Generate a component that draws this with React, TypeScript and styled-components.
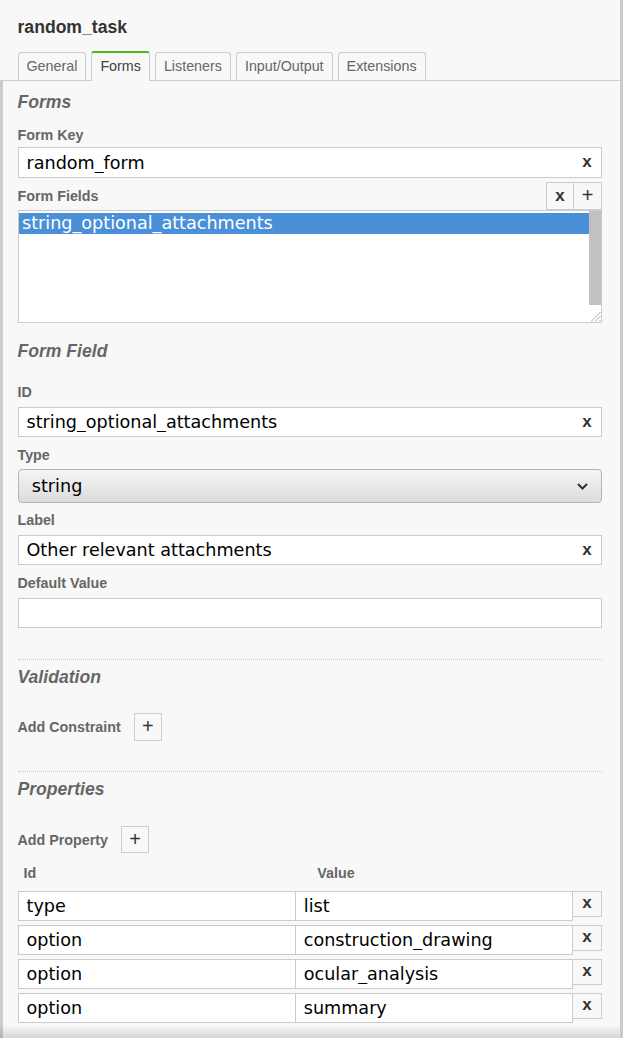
import React from 'react';
import styled, { createGlobalStyle } from 'styled-components';

const GlobalStyle = createGlobalStyle`
  html, body {
    margin: 0;
    padding: 0;
    background: #f8f8f8;
  }
  body {
    font-family: 'Liberation Sans', Arial, sans-serif;
  }
  * {
    box-sizing: border-box;
  }
`;

const Panel = styled.div`
  position: relative;
  width: 623px;
  height: 1038px;
  overflow: hidden;
  background: #f8f8f8;
  border-right: 3px solid #cbcbcb;
  display: flex;
  flex-direction: column;
`;

const Header = styled.div`
  padding: 17px 0 0 17.5px;
`;

const Title = styled.div`
  font-size: 17.6px;
  font-weight: bold;
  line-height: 20px;
  color: #333;
`;

const TabBar = styled.div`
  display: flex;
  align-items: flex-end;
  gap: 5px;
  height: 30px;
  margin-top: 14px;
  padding-left: 17.5px;
  border-bottom: 1px solid #ccc;
`;

const Tab = styled.div<{ $active?: boolean }>`
  position: relative;
  z-index: 1;
  display: flex;
  align-items: center;
  padding: 0 8px 2px;
  height: ${p => (p.$active ? '30px' : '28px')};
  margin-bottom: ${p => (p.$active ? '-1px' : '0')};
  border: 1px solid #ccc;
  border-bottom: none;
  border-top: ${p => (p.$active ? '2px solid #52b415' : '1px solid #ccc')};
  border-radius: 3px 3px 0 0;
  background: #f8f8f8;
  font-size: 14.3px;
  color: ${p => (p.$active ? '#444' : '#666')};
`;

const Content = styled.div`
  flex: 1;
  border-left: 3px solid #cccccc;
  padding: 11px 18px 0 14.5px;
`;

const GroupHeading = styled.div<{ $mt?: number }>`
  margin-top: ${p => p.$mt ?? 0}px;
  font-size: 17.6px;
  font-weight: bold;
  font-style: italic;
  line-height: 20px;
  color: #666;
`;

const Entry = styled.div<{ $mt?: number }>`
  margin-top: ${p => p.$mt ?? 0}px;
`;

const Label = styled.div<{ $mb?: number }>`
  font-size: 14.3px;
  font-weight: bold;
  line-height: 18px;
  color: #666;
  margin-bottom: ${p => p.$mb ?? 6}px;
`;

const Field = styled.div<{ $h?: number }>`
  display: flex;
  align-items: center;
  height: ${p => p.$h ?? 30}px;
  border: 1px solid #ccc;
  background: #fff;
`;

const TextInput = styled.input`
  flex: 1;
  min-width: 0;
  height: 100%;
  border: none;
  outline: none;
  background: transparent;
  padding: 0 0 0 8px;
  font-family: 'DejaVu Sans', sans-serif;
  font-size: 17.6px;
  color: #000;
`;

const ClearButton = styled.span`
  width: 28px;
  text-align: center;
  font-family: 'Liberation Sans', Arial, sans-serif;
  font-size: 17px;
  font-weight: bold;
  line-height: 1;
  color: #333;
  padding-bottom: 2px;
`;

const ListHeader = styled.div`
  display: flex;
  align-items: center;
  justify-content: space-between;
  height: 28px;
  margin-top: 4px;
`;

const ButtonGroup = styled.div`
  display: flex;
  align-self: stretch;
`;

const SquareButton = styled.div<{ $w?: number; $h?: number; $bold?: boolean }>`
  display: flex;
  align-items: center;
  justify-content: center;
  width: ${p => p.$w ?? 28}px;
  height: ${p => p.$h ?? 28}px;
  border: 1px solid #ccc;
  background: #f8f8f8;
  color: #333;
  font-size: ${p => (p.$bold ? '17px' : '20px')};
  font-weight: ${p => (p.$bold ? 'bold' : 'normal')};
  line-height: 1;
  padding-bottom: 2px;
  & + & {
    margin-left: -1px;
  }
`;

const ListBox = styled.div`
  display: flex;
  height: 113px;
  border: 1px solid #ccc;
  background: #fff;
`;

const Options = styled.div`
  flex: 1;
  padding-top: 1.5px;
`;

const Option = styled.div<{ $selected?: boolean }>`
  height: 21.5px;
  padding-left: 3.5px;
  font-family: 'DejaVu Sans', sans-serif;
  font-size: 17.6px;
  line-height: 21px;
  background: ${p => (p.$selected ? '#4a90d9' : 'transparent')};
  color: ${p => (p.$selected ? '#fff' : '#000')};
`;

const ScrollColumn = styled.div`
  width: 12.5px;
  display: flex;
  flex-direction: column;
`;

const ScrollThumb = styled.div`
  height: 94px;
  background: #c1c1c1;
`;

const ResizeCorner = styled.div`
  flex: 1;
  display: flex;
  align-items: flex-end;
  justify-content: flex-end;
`;

const SelectBox = styled.div`
  display: flex;
  align-items: center;
  justify-content: space-between;
  height: 34px;
  padding: 0 13px 0 13.3px;
  border: 1px solid #b5b5b5;
  border-radius: 4px;
  background: linear-gradient(#f5f5f5, #dcdcdc);
  font-family: 'DejaVu Sans', sans-serif;
  font-size: 17.6px;
  color: #000;
`;

const Separator = styled.div<{ $mt?: number }>`
  margin-top: ${p => p.$mt ?? 0}px;
  border-top: 1px dotted #c4c4c4;
`;

const AddRow = styled.div<{ $mt?: number }>`
  display: flex;
  align-items: center;
  gap: 13px;
  margin-top: ${p => p.$mt ?? 0}px;
`;

const InlineLabel = styled(Label)`
  margin-bottom: 0;
`;

const TableHeader = styled.div`
  display: grid;
  grid-template-columns: 1fr 1fr 29px;
  margin-top: 10.5px;
  font-size: 14.3px;
  font-weight: bold;
  line-height: 18px;
  color: #666;
`;

const HeaderCell = styled.div<{ $pl: number }>`
  padding-left: ${p => p.$pl}px;
`;

const Rows = styled.div`
  display: flex;
  flex-direction: column;
  gap: 4px;
  margin-top: 9px;
`;

const Row = styled.div`
  display: flex;
  align-items: flex-start;
`;

const Cell = styled.input`
  flex: 1;
  min-width: 0;
  height: 30px;
  border: 1px solid #ccc;
  background: #fff;
  outline: none;
  padding: 0 0 0 8px;
  font-family: 'DejaVu Sans', sans-serif;
  font-size: 17.6px;
  color: #000;
  & + & {
    margin-left: -1px;
  }
`;

const RowRemove = styled(SquareButton)`
  width: 30px;
  height: 26px;
  margin-left: -1px;
`;

const BottomShade = styled.div`
  position: absolute;
  left: 0;
  right: 0;
  bottom: 0;
  height: 13px;
  background: linear-gradient(rgba(0, 0, 0, 0), rgba(0, 0, 0, 0.14));
  pointer-events: none;
  z-index: 5;
`;

const Chevron = () => (
  <svg width="11" height="7" viewBox="0 0 11 7">
    <polyline points="1,1 5.5,5.5 10,1" fill="none" stroke="#333" strokeWidth="2" />
  </svg>
);

const Grip = () => (
  <svg width="12" height="12" viewBox="0 0 12 12">
    <line x1="11.5" y1="2" x2="2" y2="11.5" stroke="#aaa" strokeWidth="1" />
    <line x1="11.5" y1="6" x2="6" y2="11.5" stroke="#aaa" strokeWidth="1" />
    <line x1="11.5" y1="10" x2="10" y2="11.5" stroke="#aaa" strokeWidth="1" />
  </svg>
);

const TextEntry: React.FC<{
  label: string;
  value: string;
  mt?: number;
  mb?: number;
  h?: number;
  clearable?: boolean;
}> = ({ label, value, mt, mb, h, clearable = true }) => (
  <Entry $mt={mt}>
    <Label $mb={mb}>{label}</Label>
    <Field $h={h}>
      <TextInput value={value} readOnly />
      {clearable && <ClearButton>x</ClearButton>}
    </Field>
  </Entry>
);

const properties = [
  { id: 'type', value: 'list' },
  { id: 'option', value: 'construction_drawing' },
  { id: 'option', value: 'ocular_analysis' },
  { id: 'option', value: 'summary' },
];

const tabs = ['General', 'Forms', 'Listeners', 'Input/Output', 'Extensions'];

export default function App() {
  return (
    <>
      <GlobalStyle />
      <Panel>
        <Header>
          <Title>random_task</Title>
        </Header>
        <TabBar>
          {tabs.map(t => (
            <Tab key={t} $active={t === 'Forms'}>
              {t}
            </Tab>
          ))}
        </TabBar>

        <Content>
          <GroupHeading>Forms</GroupHeading>
          <TextEntry label="Form Key" value="random_form" mt={14} mb={3} h={31} />

          <ListHeader>
            <InlineLabel>Form Fields</InlineLabel>
            <ButtonGroup>
              <SquareButton $bold>x</SquareButton>
              <SquareButton $w={29}>+</SquareButton>
            </ButtonGroup>
          </ListHeader>
          <ListBox>
            <Options>
              <Option $selected>string_optional_attachments</Option>
            </Options>
            <ScrollColumn>
              <ScrollThumb />
              <ResizeCorner>
                <Grip />
              </ResizeCorner>
            </ScrollColumn>
          </ListBox>

          <GroupHeading $mt={18}>Form Field</GroupHeading>
          <TextEntry label="ID" value="string_optional_attachments" mt={22} />
          <Entry $mt={9}>
            <Label $mb={5}>Type</Label>
            <SelectBox>
              <span>string</span>
              <Chevron />
            </SelectBox>
          </Entry>
          <TextEntry label="Label" value="Other relevant attachments" mt={8} />
          <TextEntry label="Default Value" value="" mt={9} clearable={false} />

          <Separator $mt={31} />
          <GroupHeading $mt={7}>Validation</GroupHeading>
          <AddRow $mt={26}>
            <InlineLabel>Add Constraint</InlineLabel>
            <SquareButton $h={28}>+</SquareButton>
          </AddRow>

          <Separator $mt={30} />
          <GroupHeading $mt={7}>Properties</GroupHeading>
          <AddRow $mt={27}>
            <InlineLabel>Add Property</InlineLabel>
            <SquareButton $h={27}>+</SquareButton>
          </AddRow>

          <TableHeader>
            <HeaderCell $pl={6}>Id</HeaderCell>
            <HeaderCell $pl={22}>Value</HeaderCell>
            <HeaderCell $pl={0} />
          </TableHeader>
          <Rows>
            {properties.map((p, i) => (
              <Row key={i}>
                <Cell value={p.id} readOnly />
                <Cell value={p.value} readOnly />
                <RowRemove $bold>x</RowRemove>
              </Row>
            ))}
          </Rows>
        </Content>
        <BottomShade />
      </Panel>
    </>
  );
}
